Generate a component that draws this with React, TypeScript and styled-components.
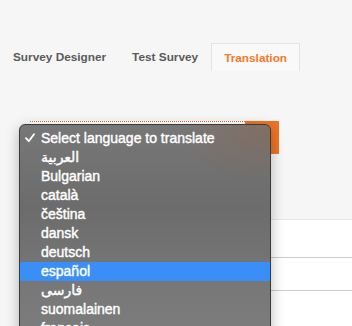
import React from "react";
import styled, { createGlobalStyle } from "styled-components";

const Global = createGlobalStyle`
  html, body { margin: 0; padding: 0; background: #f6f6f6; }
  body { width: 352px; height: 326px; overflow: hidden; font-family: "Liberation Sans", Arial, sans-serif; }
`;

const Page = styled.div`
  position: relative;
  width: 352px;
  height: 326px;
  padding-top: 43px;
  box-sizing: border-box;
`;

const TabBar = styled.div`
  display: flex;
  height: 28px;
`;

const Tab = styled.div<{ $active?: boolean }>`
  display: flex;
  align-items: center;
  padding: 0 ${(p) => (p.$active ? 12 : 13)}px;
  font-size: 11.8px;
  font-weight: 700;
  color: ${(p) => (p.$active ? "#f37a2a" : "#5a5a5a")};
  background: ${(p) => (p.$active ? "#f9f9f9" : "transparent")};
  border: ${(p) => (p.$active ? "1px solid #e3e3e3" : "none")};
  border-bottom: none;
`;

const Content = styled.div`
  padding: 50px 0 0 30px;
  display: flex;
  flex-direction: column;
`;

const SelectBox = styled.div`
  width: 249px;
  height: 33px;
  display: flex;
  box-sizing: border-box;
  border-top: 1px dotted #e0702a;
  background: #fff;
`;

const SelectField = styled.div`
  flex: 1;
`;

const SelectArrow = styled.div`
  width: 34px;
  margin-top: -1px;
  background: #ef7424;
`;

const Table = styled.div`
  margin-top: 65px;
  background: #fff;
  border-top: 1px solid #e6e6e6;
  margin-right: -1px;
`;

const Row = styled.div<{ $h: number }>`
  height: ${(p) => p.$h}px;
  border-bottom: 1px solid #cbcbcb;
`;

const Menu = styled.div`
  position: absolute;
  left: 19px;
  top: 124px;
  width: 252px;
  height: 240px;
  box-sizing: border-box;
  padding-top: 4px;
  border: 1px solid #3a3a3a;
  border-radius: 6px;
  background:
    radial-gradient(ellipse 90px 60px at 100% 0%, rgba(150, 95, 60, 0.35), rgba(150, 95, 60, 0) 100%),
    linear-gradient(180deg, #777 0%, #6c6c6c 35%, #777 65%, #7f7f7f 100%);
  box-shadow: 0 4px 14px rgba(0, 0, 0, 0.28);
  overflow: hidden;
`;

const Item = styled.div<{ $selected?: boolean }>`
  position: relative;
  height: 19px;
  box-sizing: border-box;
  padding-bottom: 1px;
  display: flex;
  align-items: center;
  padding-left: 21px;
  font-family: "Liberation Sans", "DejaVu Sans", Arial, sans-serif;
  font-size: 14px;
  color: #fff;
  -webkit-text-stroke: 0.4px #fff;
  background: ${(p) => (p.$selected ? "#3a8ef8" : "transparent")};
`;

const Check = styled.svg`
  position: absolute;
  left: 5px;
  top: 4px;
  width: 10px;
  height: 10px;
`;

const items = [
  "Select language to translate",
  "العربية",
  "Bulgarian",
  "català",
  "čeština",
  "dansk",
  "deutsch",
  "español",
  "فارسی",
  "suomalainen",
  "français",
];

export default function App() {
  return (
    <>
      <Global />
      <Page>
        <TabBar>
          <Tab>Survey Designer</Tab>
          <Tab>Test Survey</Tab>
          <Tab $active>Translation</Tab>
        </TabBar>
        <Content>
          <SelectBox>
            <SelectField />
            <SelectArrow />
          </SelectBox>
          <Table>
            <Row $h={37} />
            <Row $h={32} />
            <Row $h={40} />
          </Table>
        </Content>
        <Menu>
          {items.map((t, i) => (
            <Item key={t} $selected={t === "español"}>
              {i === 0 && (
                <Check viewBox="0 0 10 10">
                  <path d="M1 5.2 L3.8 8.2 L9 1.2" fill="none" stroke="#fff" strokeWidth="1.8" strokeLinecap="round" strokeLinejoin="round" />
                </Check>
              )}
              <span dir="auto">{t}</span>
            </Item>
          ))}
        </Menu>
      </Page>
    </>
  );
}
